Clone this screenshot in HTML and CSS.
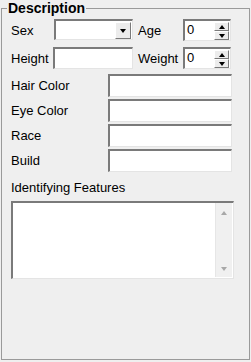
FILE: index.html
```html
<!DOCTYPE html>
<html>
<head>
  <title>Description</title>
  <link rel="stylesheet" href="styles.css">
</head>
<body>
  <fieldset class="group">
    <legend>Description</legend>

    <div class="top-grid">
      <label>Sex</label>
      <div class="combo">
        <span class="combo-text"></span>
        <span class="btn3d drop-btn"><span class="tri-down"></span></span>
      </div>
      <label class="pad">Age</label>
      <div class="spin">
        <span class="spin-val">0</span>
        <span class="spin-btns">
          <span class="btn3d spin-btn"><span class="tri-up"></span></span>
          <span class="btn3d spin-btn"><span class="tri-down"></span></span>
        </span>
      </div>

      <label>Height</label>
      <div class="field"></div>
      <label class="pad">Weight</label>
      <div class="spin">
        <span class="spin-val">0</span>
        <span class="spin-btns">
          <span class="btn3d spin-btn"><span class="tri-up"></span></span>
          <span class="btn3d spin-btn"><span class="tri-down"></span></span>
        </span>
      </div>
    </div>

    <div class="field-grid">
      <label>Hair Color</label>
      <div class="field"></div>
      <label>Eye Color</label>
      <div class="field"></div>
      <label>Race</label>
      <div class="field"></div>
      <label>Build</label>
      <div class="field"></div>
    </div>

    <div class="notes-label">Identifying Features</div>
    <div class="notes">
      <div class="notes-area"></div>
      <div class="vscroll">
        <span class="tri-up small"></span>
        <span class="tri-down small"></span>
      </div>
    </div>
  </fieldset>
</body>
</html>
```

FILE: styles.css
```css
body {
  margin: 0;
  padding: 0;
  background-color: #efefef;
  font-family: "Liberation Sans", Arial, sans-serif;
  font-size: 13px;
  color: #000;
}

.group {
  box-sizing: border-box;
  height: 360px;
  margin: 0 1px;
  padding: 0 0 0 9px;
  border: 1px solid #9a9a9a;
}

.group legend {
  margin-left: -4px;
  padding: 0 1px;
  font-size: 14px;
  font-weight: bold;
  line-height: 16px;
}

label {
  display: flex;
  align-items: center;
}

/* sunken edit box */
.field,
.combo,
.spin,
.notes {
  box-sizing: border-box;
  background: #fff;
  border-style: solid;
  border-width: 2px 1px 1px 2px;
  border-color: #7a7a7a #e4e4e4 #e4e4e4 #7a7a7a;
}

/* raised button face */
.btn3d {
  box-sizing: border-box;
  display: flex;
  align-items: center;
  justify-content: center;
  background: #ececec;
  border-style: solid;
  border-width: 1px;
  border-color: #fff #7a7a7a #7a7a7a #fff;
}

.tri-down,
.tri-up {
  width: 0;
  height: 0;
  border-left: 3.5px solid transparent;
  border-right: 3.5px solid transparent;
}

.tri-down {
  border-top: 4px solid #000;
}

.tri-up {
  border-bottom: 4px solid #000;
}

.tri-down.small {
  border-top-color: #a8a8a8;
}

.tri-up.small {
  border-bottom-color: #a8a8a8;
}

.top-grid {
  display: grid;
  grid-template-columns: 42px 80px 50px 48px;
  grid-template-rows: 22px 22px;
  row-gap: 6px;
  margin-top: 3px;
}

.top-grid .pad {
  padding-left: 5px;
}

.combo {
  display: flex;
  justify-content: flex-end;
  padding: 0 1px 0 0;
  width: 79px;
  height: 21px;
  margin-left: 1px;
}

.drop-btn {
  width: 16px;
  height: 17px;
  margin-top: 1px;
}

.spin {
  display: flex;
  justify-content: space-between;
  padding-right: 1px;
}

.spin-val {
  padding-left: 2px;
  line-height: 17px;
}

.spin-btns {
  display: flex;
  flex-direction: column;
  padding-top: 1px;
}

.spin-btn {
  width: 15px;
  height: 9px;
}

.field-grid {
  display: grid;
  grid-template-columns: 97px 124px;
  grid-auto-rows: 23px;
  row-gap: 2px;
  margin-top: 5px;
}

.notes-label {
  margin-top: 8px;
  line-height: 15px;
}

.notes {
  display: flex;
  justify-content: flex-end;
  width: 223px;
  height: 78px;
  margin-top: 6px;
  padding: 0 1px 1px 0;
}

.vscroll {
  display: flex;
  flex-direction: column;
  justify-content: space-between;
  align-items: center;
  width: 16px;
  padding: 8px 0 6px;
  background: #f0f0f0;
  border-left: 1px solid #e6e6e6;
}
```
